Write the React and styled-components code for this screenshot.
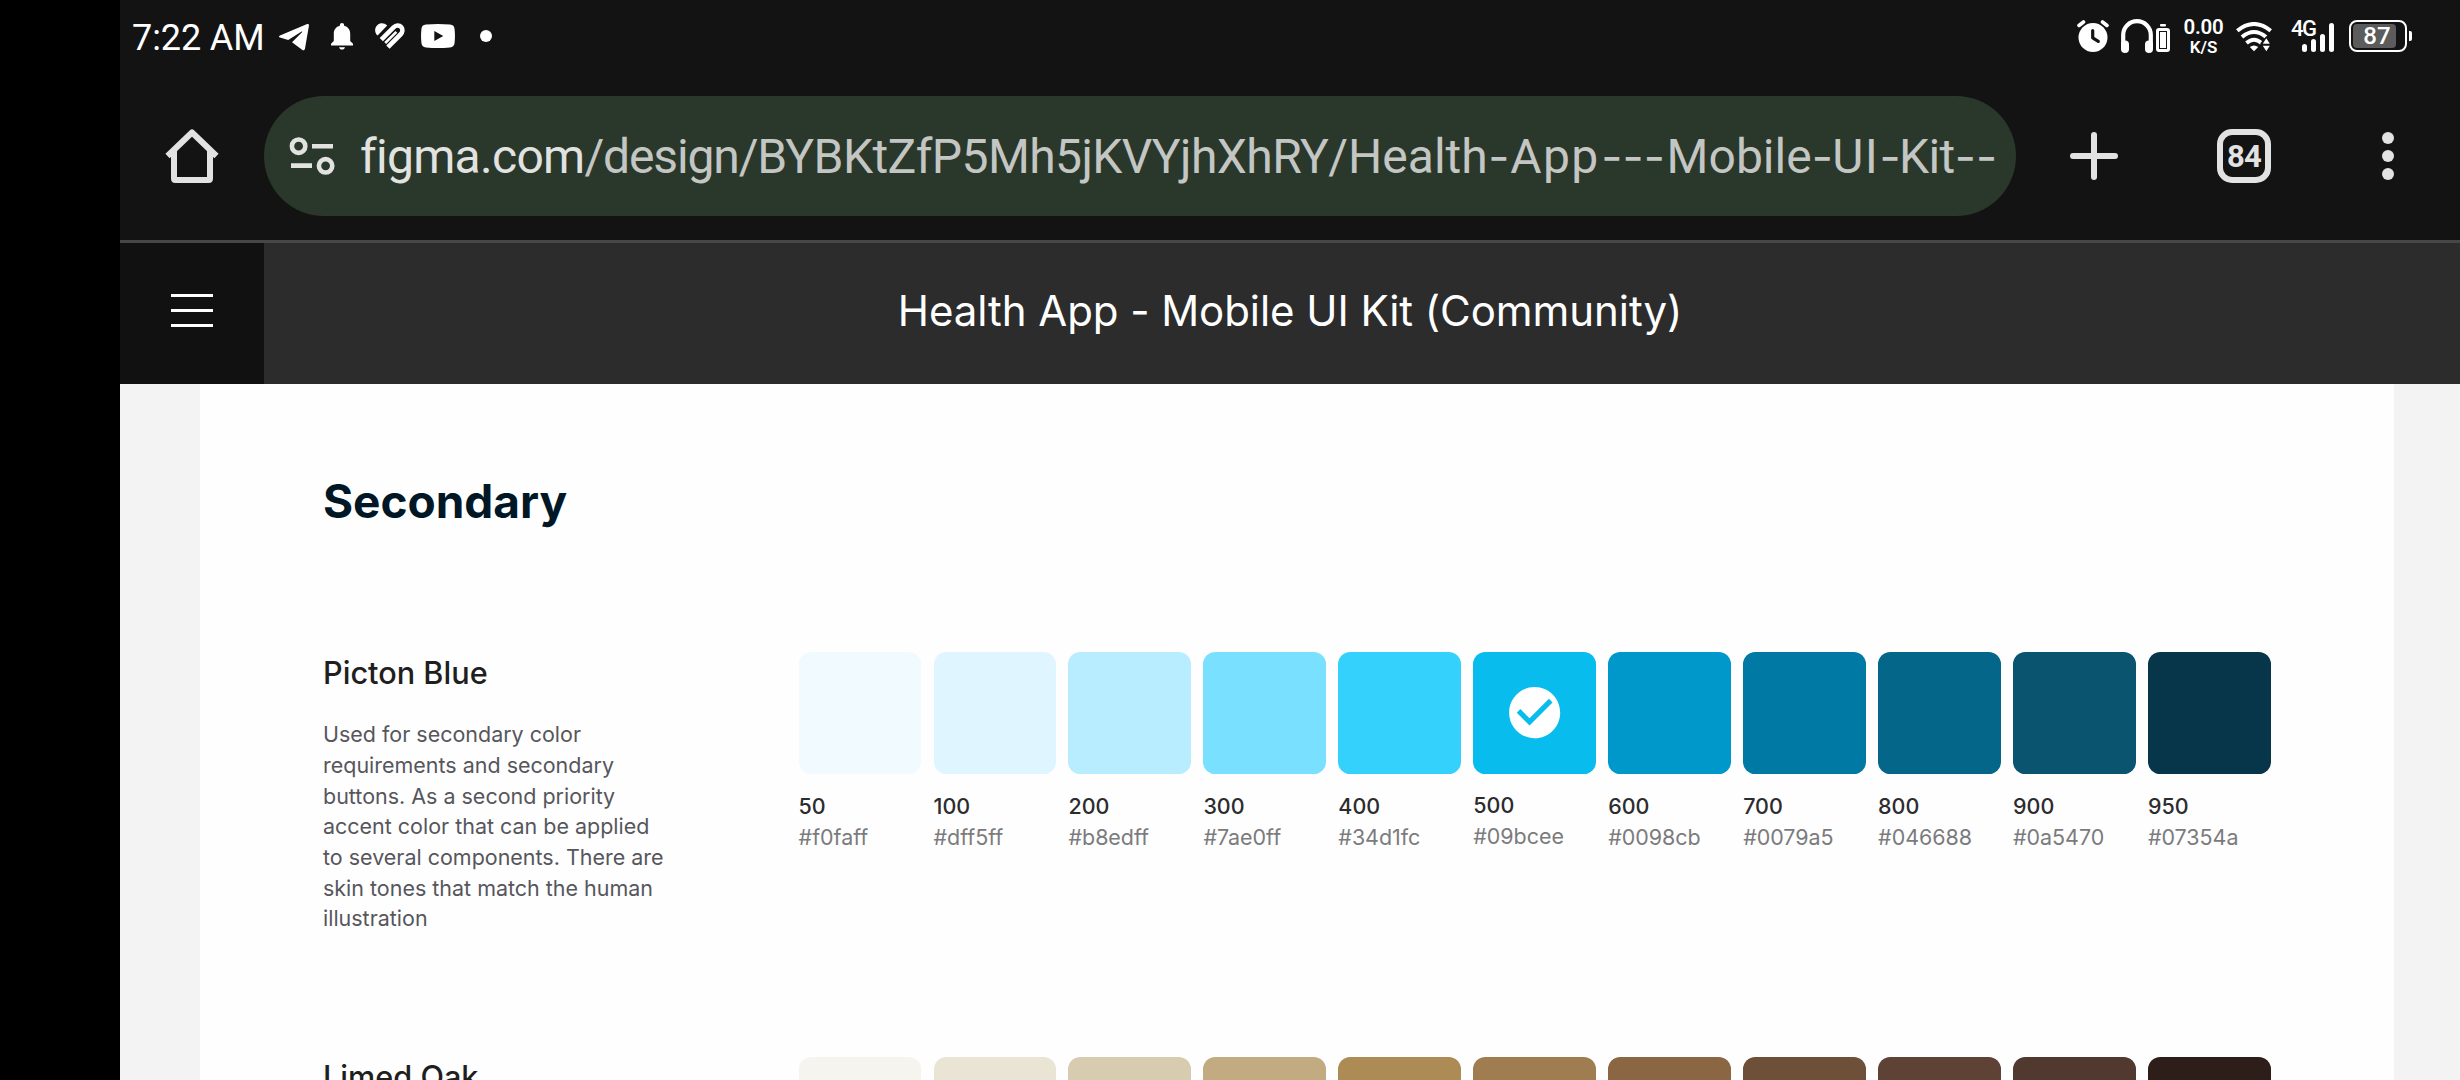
import React from "react";
import styled, { createGlobalStyle } from "styled-components";

const GlobalStyle = createGlobalStyle`
  * { box-sizing: border-box; }
  html, body { margin: 0; padding: 0; background: #000; overflow: hidden; }
  svg { display: block; flex: none; }
`;

const Screen = styled.div`
  display: flex;
  flex-direction: column;
  width: 2460px;
  height: 1080px;
  padding-left: 120px;
  overflow: hidden;
  background: #000;
  font-family: Inter, "Liberation Sans", sans-serif;
`;

/* ---------- system status bar ---------- */

const StatusBar = styled.div`
  display: flex;
  justify-content: space-between;
  flex: none;
  height: 72px;
  padding: 0 48px 0 12px;
  background: #131313;
  color: #fff;
  font-family: Roboto, "Liberation Sans", sans-serif;
`;

const StatusGroup = styled.div`
  display: flex;
  align-items: center;
`;

const Clock = styled.span`
  width: 133px;
  margin-right: 14px;
  padding-top: 3px;
  font-size: 36px;
  line-height: 72px;
  letter-spacing: -0.1px;
  white-space: nowrap;
`;

const IconSlot = styled.span`
  display: block;
  margin-left: ${(p) => p.$gap || 0}px;
  padding-top: ${(p) => p.$drop || 0}px;
`;

const MoreDot = styled.span`
  width: 12px;
  height: 12px;
  margin-left: 25px;
  border-radius: 50%;
  background: #fff;
`;

const NetSpeed = styled.div`
  display: flex;
  flex-direction: column;
  align-items: center;
  width: 42px;
  margin-left: 12.5px;
  margin-right: 0.5px;
  font-weight: 600;
`;

const SpeedValue = styled.span`
  font-size: 20.5px;
  line-height: 21px;
  letter-spacing: -0.2px;
`;

const SpeedUnit = styled.span`
  font-size: 17px;
  line-height: 18px;
`;

const Cellular = styled.div`
  position: relative;
  display: flex;
  align-items: flex-end;
  gap: 4px;
  width: 42px;
  height: 31px;
  margin-left: 20px;
  padding-left: 10px;
`;

const NetworkType = styled.span`
  position: absolute;
  left: -1px;
  top: -5px;
  font-size: 22px;
  font-weight: 500;
  line-height: 25px;
  letter-spacing: -1.6px;
`;

const SignalBar = styled.i`
  width: 5px;
  height: ${(p) => p.$h}px;
  border-radius: 2.5px;
  background: #fff;
`;

const Battery = styled.div`
  display: flex;
  align-items: center;
  gap: 2px;
  margin-left: 15px;
`;

const BatteryCase = styled.div`
  position: relative;
  display: flex;
  align-items: center;
  justify-content: center;
  width: 58px;
  height: 32px;
  border: 2px solid #fff;
  border-radius: 8px;
`;

const BatteryFill = styled.div`
  position: absolute;
  left: 2px;
  top: 2px;
  width: 43px;
  height: 24px;
  border-radius: 4px;
  background: #5c5c5c;
`;

const BatteryLevel = styled.span`
  position: relative;
  padding-right: 2px;
  font-size: 24px;
  font-weight: 500;
  line-height: 28px;
`;

const BatteryTip = styled.i`
  width: 3px;
  height: 10px;
  border-radius: 0 2px 2px 0;
  background: #fff;
`;

/* ---------- browser toolbar ---------- */

const Toolbar = styled.div`
  display: flex;
  align-items: center;
  flex: none;
  height: 171px;
  padding: 0 66px 0 45px;
  border-bottom: 3px solid #474747;
  background: #131313;
`;

const AddressBar = styled.div`
  display: flex;
  align-items: center;
  width: 1752px;
  height: 120px;
  margin: 0 54px 0 45px;
  padding-left: 25px;
  border-radius: 60px;
  background: #2a382c;
`;

const Url = styled.div`
  display: flex;
  align-items: baseline;
  margin-left: 25px;
  color: #c4c6c3;
  font-family: Roboto, "Liberation Sans", sans-serif;
  font-size: 48px;
  line-height: 60px;
  white-space: nowrap;
`;

const UrlPart = styled.span`
  letter-spacing: ${(p) => p.$track || 0}px;
`;

const UrlHost = styled(UrlPart)`
  color: #e2e3e1;
`;

const Hyphens = styled.span`
  width: ${(p) => p.$w}px;
  font-family: Inter, sans-serif;
  font-size: 46px;
  text-align: center;
`;

const TabCount = styled.div`
  display: flex;
  align-items: center;
  justify-content: center;
  width: 54px;
  height: 54px;
  margin: 0 111px 0 99px;
  padding-top: 2px;
  border: 6px solid #e2e2e2;
  border-radius: 15px;
  color: #e2e2e2;
  font-family: Roboto, "Liberation Sans", sans-serif;
  font-size: 31px;
  font-weight: 700;
  letter-spacing: -0.9px;
  line-height: 36px;
`;

const OverflowMenu = styled.div`
  display: flex;
  flex-direction: column;
  gap: 6px;
`;

const OverflowDot = styled.i`
  width: 12px;
  height: 12px;
  border-radius: 50%;
  background: #e2e2e2;
`;

/* ---------- file header ---------- */

const FileHeader = styled.header`
  display: flex;
  flex: none;
  height: 141px;
  background: #2c2c2c;
`;

const MenuButton = styled.div`
  display: flex;
  flex-direction: column;
  align-items: center;
  justify-content: center;
  gap: 12px;
  width: 144px;
  padding-bottom: 6px;
  background: #111;
`;

const MenuLine = styled.i`
  width: 42px;
  height: 3px;
  background: #fff;
`;

const FileTitle = styled.h1`
  flex: 1;
  margin: 0;
  padding-right: 144px;
  color: #fff;
  font-size: 42px;
  font-weight: 400;
  letter-spacing: -0.06px;
  line-height: 135px;
  text-align: center;
  white-space: nowrap;
`;

/* ---------- canvas ---------- */

const Canvas = styled.main`
  display: flex;
  flex: 1;
  min-height: 0;
  padding: 0 66px 0 80px;
  overflow: hidden;
  background: #f3f3f3;
`;

const Frame = styled.section`
  width: 2194px;
  padding: 89px 0 0 123px;
  background: #fefefe;
`;

const GroupTitle = styled.h2`
  margin: 0 0 123px;
  color: #001726;
  font-size: 46px;
  font-weight: 700;
  letter-spacing: -0.02px;
  line-height: 56px;
`;

const Palette = styled.article`
  display: flex;
  height: 404.5px;
`;

const PaletteInfo = styled.div`
  width: 475.6px;
  padding-top: 1.5px;
`;

const PaletteName = styled.h3`
  margin: 0 0 27.7px;
  color: #1f1f1f;
  font-size: 30.67px;
  font-weight: 450;
  line-height: 38px;
`;

const PaletteText = styled.p`
  margin: 0;
  color: #56565c;
  font-size: 21.47px;
  line-height: 30.7px;
  white-space: pre-line;
`;

const Shades = styled.div`
  display: flex;
  gap: 12.26px;
`;

const Shade = styled.div`
  width: 122.7px;
`;

const Swatch = styled.div`
  display: flex;
  align-items: center;
  justify-content: center;
  height: 122.4px;
  margin-bottom: ${(p) => (p.$selected ? 15.8 : 17.1)}px;
  padding-bottom: 2px;
  border-radius: 12.3px;
  background: ${(p) => p.$color};
`;

const ShadeStep = styled.div`
  color: #2c2c2e;
  font-size: 21.47px;
  font-weight: 450;
  line-height: 30.7px;
`;

const ShadeHex = styled.div`
  color: #7b7b7d;
  font-size: 21.47px;
  letter-spacing: -0.04px;
  line-height: 30.7px;
`;

/* ---------- icons ---------- */

const BG = "#131313";

const TelegramIcon = () => (
  <svg width="30" height="27" viewBox="0 0 30 27" fill="#fff">
    <path d="M1 11.6 27.6.3c1.6-.6 2.6.1 2.3 1.7L26 24.5c-.3 1.8-1.5 2.2-2.9 1.2L13 18.3 23 8.2c.5-.6-.1-.9-.8-.4L9.200 16.100 1 13.600c-1.300-.400-1.300-1.400 0-2Z" />
  </svg>
);

const BellIcon = () => (
  <svg width="22" height="27" viewBox="0 0 22 27" fill="#fff">
    <path d="M11 0c1.200 0 2.100.9 2.100 2v.8c4 .9 6.100 4.200 6.100 8.200v7l2.800 2.700V22.500H0v-1.800L2.800 18v-7c0-4 2.100-7.300 6.100-8.200V2C8.900.9 9.800 0 11 0Z" />
    <path d="M8 24.200h6c-.5 1.600-1.500 2.400-3 2.400s-2.500-.8-3-2.400Z" />
  </svg>
);

const HeartIcon = () => (
  <svg width="30" height="27" viewBox="0 0 30 27" fill="none" stroke="#fff" strokeWidth="4.600">
    <path d="M2.600 12.600C-.8 9.400-.5 4.700 2.300 2.200 5-.3 9.200-.3 12.200 2.600Z" fill="#fff" stroke="none" />
    <path d="M6.300 16.600 18.600 4.400C21 2 24.300 1.900 26.200 4.100c1.900 2.300 1.500 5.200-.7 7.400L12.900 24.200" />
    <path d="m10.200 20 11.200-11.200" strokeWidth="2.600" />
  </svg>
);

const VideoIcon = () => (
  <svg width="34" height="24" viewBox="0 0 34 24">
    <path d="M5 .6Q17-.5 29 .6c3 .3 4.300 1.700 4.600 4.700q.7 6.700 0 13.400c-.3 3-1.600 4.400-4.600 4.700q-12 1.100-24 0c-3-.3-4.300-1.700-4.600-4.700q-.7-6.700 0-13.400C.7 2.300 2 .9 5 .6Z" fill="#fff" />
    <path d="M13.300 7v10l9-5Z" fill={BG} />
  </svg>
);

const AlarmIcon = () => (
  <svg width="32" height="32" viewBox="0 0 32 32" fill="none" strokeLinecap="round">
    <circle cx="16" cy="17.500" r="14.500" fill="#fff" />
    <path d="M2 5.500 6.500 2M30 5.500 25.500 2" stroke="#fff" strokeWidth="3.600" />
    <path d="M15.700 10.500v7.300l5.600 3.500" stroke={BG} strokeWidth="3.200" strokeLinejoin="round" />
  </svg>
);

const HeadphonesIcon = () => (
  <svg width="32" height="34" viewBox="0 0 32 34">
    <path d="M2.200 28V16a13.800 13.800 0 0 1 27.600 0v12" fill="none" stroke="#fff" strokeWidth="4.200" />
    <rect x="0" y="21.500" width="8" height="12.500" rx="4" fill="#fff" />
    <rect x="24" y="21.500" width="8" height="12.500" rx="4" fill="#fff" />
  </svg>
);

const DeviceBatteryIcon = () => (
  <svg width="14" height="28" viewBox="0 0 14 28">
    <rect x="4" width="6" height="2.600" rx="1" fill="#fff" />
    <rect y="4" width="14" height="24" rx="3" fill="#fff" />
    <rect x="3.500" y="7.500" width="7" height="17" fill="none" stroke={BG} />
  </svg>
);

const WifiIcon = () => (
  <svg width="36" height="30" viewBox="0 0 36 30">
    <g fill="none" stroke="#fff" strokeWidth="4">
      <path d="M1.300 8.800Q18-4.800 34.700 8.800" />
      <path d="M6 15Q18 5 30 15" />
      <path d="M10.500 21Q18 14.500 25.500 21" />
    </g>
    <path d="M13.800 25q4.200-3.200 8.400 0L18 29.300Z" fill="#fff" />
    <path d="M30.300 14.200 36 21v9H24.500v-9Z" fill={BG} />
    <path d="m30.300 16.200 3.500 5.600h-7ZM30.300 29.300l-3.500-5.600h7Z" fill="#fff" />
  </svg>
);

const HomeIcon = () => (
  <svg width="54" height="54" viewBox="0 0 54 54" fill="none" stroke="#e2e2e2" strokeWidth="6" strokeLinejoin="round">
    <path d="M2.500 27 27 3.500 51.500 27" />
    <path d="M9 22v27.500q0 1.500 1.500 1.500h33q1.500 0 1.500-1.500V22" />
  </svg>
);

const SiteSettingsIcon = () => (
  <svg width="46" height="38" viewBox="0 0 46 38" fill="none" stroke="#e2e3e1" strokeWidth="4.600">
    <circle cx="9.600" cy="9.200" r="6.700" />
    <path d="M23 9.200h21M2 28.600h21" />
    <circle cx="36.600" cy="28.800" r="6.700" />
  </svg>
);

const PlusIcon = () => (
  <svg width="48" height="48" viewBox="0 0 48 48" fill="none" stroke="#e2e2e2" strokeWidth="6" strokeLinecap="round">
    <path d="M24 3v42M3 24h42" />
  </svg>
);

const CheckIcon = () => (
  <svg width="61.300" height="61.300" viewBox="0 0 24 24" fill="#fff">
    <path d="M12 2C6.480 2 2 6.480 2 12s4.480 10 10 10 10-4.480 10-10S17.520 2 12 2zm-2 15l-5-5 1.410-1.410L10 14.170l7.590-7.590L19 8l-9 9z" />
  </svg>
);

/* ---------- data ---------- */

const STEPS = ["50", "100", "200", "300", "400", "500", "600", "700", "800", "900", "950"];

const PALETTES = [
  {
    name: "Picton Blue",
    text: "Used for secondary color\nrequirements and secondary\nbuttons. As a second priority\naccent color that can be applied\nto several components. There are\nskin tones that match the human\nillustration",
    selected: "500",
    colors: ["#f0faff", "#dff5ff", "#b8edff", "#7ae0ff", "#34d1fc", "#09bcee", "#0098cb", "#0079a5", "#046688", "#0a5470", "#07354a"],
  },
  {
    name: "Limed Oak",
    colors: ["#f5f4ef", "#e9e4d4", "#d7ccaf", "#c2aa81", "#ac8b55", "#a07d51", "#8a6742", "#6e4f37", "#5e4236", "#513930", "#2d1e19"],
  },
];

function PaletteRow({ palette }) {
  return (
    <Palette>
      <PaletteInfo>
        <PaletteName>{palette.name}</PaletteName>
        {palette.text && <PaletteText>{palette.text}</PaletteText>}
      </PaletteInfo>
      <Shades>
        {palette.colors.map((color, i) => {
          const selected = STEPS[i] === palette.selected;
          return (
            <Shade key={color}>
              <Swatch $color={color} $selected={selected}>{selected && <CheckIcon />}</Swatch>
              {palette.text && (
                <>
                  <ShadeStep>{STEPS[i]}</ShadeStep>
                  <ShadeHex>{color}</ShadeHex>
                </>
              )}
            </Shade>
          );
        })}
      </Shades>
    </Palette>
  );
}

export default function App() {
  return (
    <>
      <GlobalStyle />
      <Screen>
        <StatusBar>
          <StatusGroup>
            <Clock>7:22 AM</Clock>
            <IconSlot $drop={2}><TelegramIcon /></IconSlot>
            <IconSlot $gap={22} $drop={1}><BellIcon /></IconSlot>
            <IconSlot $gap={22}><HeartIcon /></IconSlot>
            <IconSlot $gap={16}><VideoIcon /></IconSlot>
            <MoreDot />
          </StatusGroup>
          <StatusGroup>
            <AlarmIcon />
            <IconSlot $gap={12}><HeadphonesIcon /></IconSlot>
            <IconSlot $gap={3} $drop={4}><DeviceBatteryIcon /></IconSlot>
            <NetSpeed>
              <SpeedValue>0.00</SpeedValue>
              <SpeedUnit>K/S</SpeedUnit>
            </NetSpeed>
            <IconSlot $gap={11} $drop={1}><WifiIcon /></IconSlot>
            <Cellular>
              <NetworkType>4G</NetworkType>
              <SignalBar $h={8} />
              <SignalBar $h={13} />
              <SignalBar $h={18} />
              <SignalBar $h={29} />
            </Cellular>
            <Battery>
              <BatteryCase>
                <BatteryFill />
                <BatteryLevel>87</BatteryLevel>
              </BatteryCase>
              <BatteryTip />
            </Battery>
          </StatusGroup>
        </StatusBar>

        <Toolbar>
          <HomeIcon />
          <AddressBar>
            <SiteSettingsIcon />
            <Url>
              <UrlHost $track={-0.7}>figma.com</UrlHost>
              <UrlPart $track={-1.15}>/design/</UrlPart>
              <UrlPart $track={-0.59}>BYBKtZfP5Mh5jKVYjhXhRY</UrlPart>
              <UrlPart>/Health</UrlPart>
              <Hyphens $w={22.5}>-</Hyphens>
              <UrlPart $track={1.4}>App</UrlPart>
              <Hyphens $w={67}>---</Hyphens>
              <UrlPart>Mobile</UrlPart>
              <Hyphens $w={20.5}>-</Hyphens>
              <UrlPart $track={1.6}>UI</UrlPart>
              <Hyphens $w={19.5}>-</Hyphens>
              <UrlPart $track={-0.6}>Kit</UrlPart>
              <Hyphens $w={35}>--</Hyphens>
            </Url>
          </AddressBar>
          <PlusIcon />
          <TabCount>84</TabCount>
          <OverflowMenu>
            <OverflowDot />
            <OverflowDot />
            <OverflowDot />
          </OverflowMenu>
        </Toolbar>

        <FileHeader>
          <MenuButton>
            <MenuLine />
            <MenuLine />
            <MenuLine />
          </MenuButton>
          <FileTitle>Health App - Mobile UI Kit (Community)</FileTitle>
        </FileHeader>

        <Canvas>
          <Frame>
            <GroupTitle>Secondary</GroupTitle>
            {PALETTES.map((palette) => (
              <PaletteRow key={palette.name} palette={palette} />
            ))}
          </Frame>
        </Canvas>
      </Screen>
    </>
  );
}
